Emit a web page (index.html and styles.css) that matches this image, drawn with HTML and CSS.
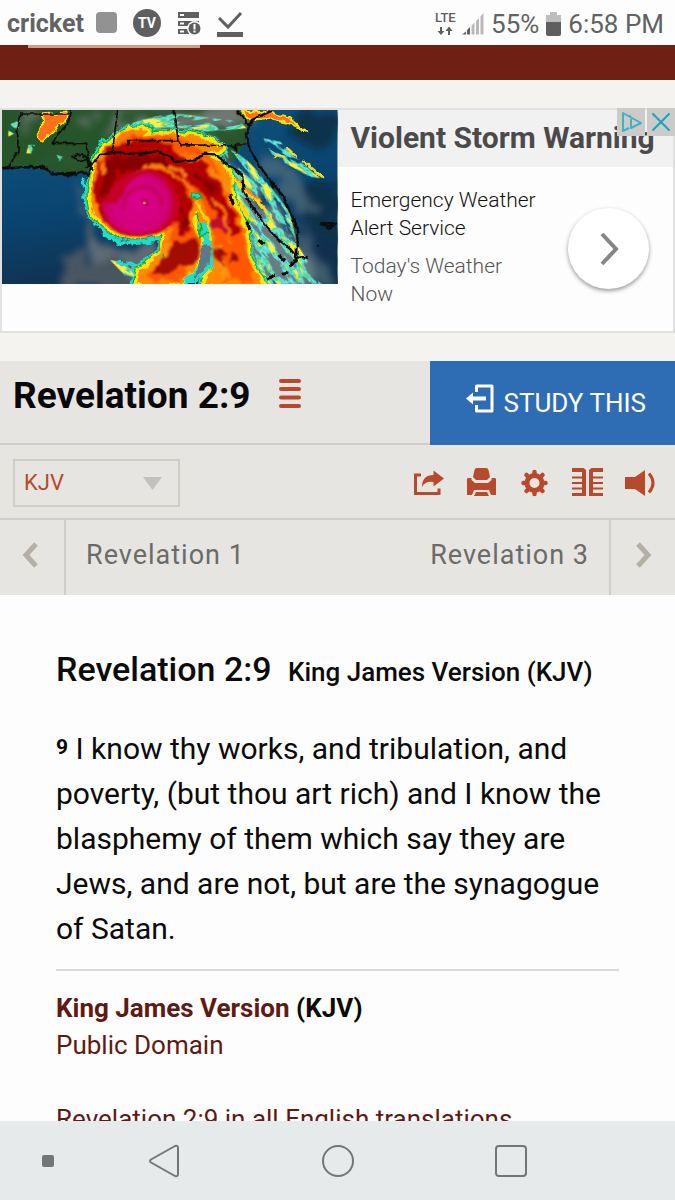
FILE: index.html
```html
<!DOCTYPE html>
<html lang="en">
<head>
<meta charset="utf-8">
<meta name="viewport" content="width=device-width, initial-scale=1">
<title>Revelation 2:9 KJV</title>
<link rel="stylesheet" href="styles.css">
</head>
<body>
<div class="status">
  <div class="status-group">
    <span class="carrier">cricket</span>
    <svg class="status-icons" viewBox="0 0 150 30" width="150" height="30" aria-hidden="true">
      <rect x="1" y="3" width="21" height="21" rx="4" fill="#929292"/>
      <circle cx="52" cy="14" r="14" fill="#5f5f5f"/>
      <text x="52" y="19" class="tv-label" text-anchor="middle">TV</text>
      <path fill="#5f5f5f" d="M83 3h21v6H83zM83 12h21v5H83zM83 20h13v5H83z"/>
      <path fill="#fff" d="M85 5h4v2h-4zM85 13.500h4v2h-4zM85 21.500h4v2h-4z"/>
      <circle cx="99.500" cy="19.500" r="7.500" fill="#fff"/>
      <circle cx="99.500" cy="19.500" r="6" fill="#5f5f5f"/>
      <path stroke="#fff" stroke-width="2" d="M99.500 15v5.500M99.500 21.500v2"/>
      <path fill="none" stroke="#5f5f5f" stroke-width="3" d="M124 9l9 9 13-14"/>
      <path fill="#5f5f5f" d="M122 23h26v5h-26z"/>
    </svg>
  </div>
  <div class="status-group">
    <svg class="signal" viewBox="0 0 49 30" width="49" height="30" aria-hidden="true">
      <text x="0" y="13" class="lte-label">LTE</text>
      <path fill="#5f5f5f" d="M5 18h2v4h2.500L6 26l-3.500-4H5zM13 26h2v-4h2.500L14 17.500 10.500 22H13z"/>
      <path fill="#5f5f5f" d="M27 25.500l4-3v3zM32 21l3-3v7.500h-3z"/>
      <path fill="#b9b9b9" d="M36.500 16.500l3-3v12h-3zM41 12l3-3v16.500h-3zM45.500 7.500l3-3.500v21.500h-3z"/>
    </svg>
    <span class="battery-text">55%</span>
    <svg viewBox="0 0 15 26" width="15" height="26" aria-hidden="true">
      <path fill="#bdbdbd" d="M4 1h7v3h4v9H0V4h4z"/>
      <path fill="#5f5f5f" d="M0 11h15v12q0 2-2 2H2q-2 0-2-2z"/>
    </svg>
    <span class="clock">6:58 PM</span>
  </div>
</div>

<div class="page">
  <header class="banner"><div class="banner-field"></div></header>

  <section class="ad" aria-label="Advertisement">
    <svg class="ad-photo" viewBox="6 30 1006 522" preserveAspectRatio="none" role="img" aria-label="Satellite view of a hurricane">
      <defs>
        <filter id="rough" x="-10%" y="-10%" width="120%" height="120%">
          <feTurbulence type="fractalNoise" baseFrequency="0.035" numOctaves="4" seed="4"/>
          <feDisplacementMap in="SourceGraphic" scale="24" xChannelSelector="R" yChannelSelector="G"/>
        </filter>
        <filter id="heat" x="-10%" y="-10%" width="120%" height="120%">
          <feTurbulence type="fractalNoise" baseFrequency="0.025" numOctaves="4" seed="7"/>
          <feDisplacementMap in="SourceGraphic" scale="44" xChannelSelector="R" yChannelSelector="G"/>
          <feGaussianBlur stdDeviation="3"/>
        </filter>
        <filter id="haze" x="-20%" y="-20%" width="140%" height="140%">
          <feTurbulence type="fractalNoise" baseFrequency="0.015" numOctaves="4" seed="2"/>
          <feDisplacementMap in="SourceGraphic" scale="90" xChannelSelector="R" yChannelSelector="G"/>
          <feGaussianBlur stdDeviation="11"/>
        </filter>
        <filter id="coast" x="-10%" y="-10%" width="120%" height="120%">
          <feTurbulence type="fractalNoise" baseFrequency="0.060" numOctaves="2" seed="9"/>
          <feDisplacementMap in="SourceGraphic" scale="12" xChannelSelector="R" yChannelSelector="G"/>
        </filter>
        <filter id="soft" x="-20%" y="-20%" width="140%" height="140%"><feGaussianBlur stdDeviation="5"/></filter>
        <filter id="streaks" x="-10%" y="-10%" width="120%" height="120%">
          <feTurbulence type="fractalNoise" baseFrequency="0.012 0.045" numOctaves="4" seed="12" result="n"/>
          <feColorMatrix in="n" type="matrix" values="0 0 0 0 0.130  0 0 0 0 0.870  0 0 0 0 0.800  12 0 0 0 -5.100" result="c"/>
          <feColorMatrix in="n" type="matrix" values="0 0 0 0 0.070  0 0 0 0 0.640  0 0 0 0 0.220  16 0 0 0 -8.200" result="g"/>
          <feColorMatrix in="n" type="matrix" values="0 0 0 0 0.960  0 0 0 0 0.860  0 0 0 0 0.060  18 0 0 0 -10.800" result="y"/>
          <feMerge result="m"><feMergeNode in="c"/><feMergeNode in="g"/><feMergeNode in="y"/></feMerge>
          <feComposite in="m" in2="SourceGraphic" operator="in"/>
        </filter>
        <linearGradient id="sea" x1="0" y1="0" x2="0.300" y2="1">
          <stop offset="0" stop-color="#0f5680"/><stop offset="0.600" stop-color="#09446f"/><stop offset="1" stop-color="#12304f"/>
        </linearGradient>
        <radialGradient id="core" gradientUnits="userSpaceOnUse" cx="415" cy="310" r="115">
          <stop offset="0" stop-color="#d9058a"/><stop offset="0.700" stop-color="#d4047c"/><stop offset="1" stop-color="#c00046"/>
        </radialGradient>
        <path id="storm" d="M282 215Q290 150 340 120Q390 85 445 85Q440 98 420 112Q540 94 620 118L665 145Q640 160 610 160Q665 185 688 225L692 300Q730 350 740 410Q735 450 750 490L785 552H610L640 500Q635 440 622 400Q600 370 590 330Q575 360 580 400Q615 420 600 465Q580 510 545 552H415Q405 520 430 500Q475 480 488 450Q480 410 520 372Q460 408 400 408Q330 403 288 350Q262 300 282 240Z"/>
      </defs>
      <rect x="6" y="30" width="1006" height="522" fill="url(#sea)"/>
      <g filter="url(#haze)">
        <path fill="#07304b" d="M900 30h112v70l-60 60-80-60zM900 250h112v190l-90-60zM930 480h92v72h-92z"/>
        <path fill="#5e6a76" d="M235 240l30 130q60 90 160 90l60-30 10 60-80 72H230q20-60 50-90-50-100-45-232z"/>
        <path fill="#4a5662" d="M190 470h200v90H180z"/>
        <path fill="#56707e" d="M760 140q60 0 120 80l70 110-40 10-70-90-60-10zM900 380q50 80 100 130l-20 42H890z" opacity=".7"/>
        <path fill="#687c84" d="M650 160q170 130 240 280l60 112H770L680 330z"/>
      </g>
      <path filter="url(#coast)" fill="#28552c" d="M0 20H790L745 80 735 130 700 180 600 165 520 190 470 158 300 160 265 215 200 225 140 205 6 203z"/>
      <g filter="url(#haze)">
        <path fill="#6f7872" d="M360 30h400l-20 50-210 10-180 0-40 40z"/>
        <path fill="#5f6c60" d="M215 30h80l-50 70zM60 50l50-10-20 60zM580 100l140 60-30 20-100-40z"/>
      </g>
      <path fill="#2b572e" filter="url(#haze)" d="M360 20h150l10 40-150 20zM590 75l130 10 10 35-80-10zM110 150l140 10 10 40-140 10z"/>
      <g transform="rotate(-10)" filter="url(#streaks)"><g transform="rotate(10)"><path d="M340 100Q420 45 540 42L720 65 740 85 620 95Q450 60 340 120z"/></g></g>
      <g transform="rotate(55)" filter="url(#streaks)"><g transform="rotate(-55)"><path d="M610 125Q700 135 760 200Q830 280 870 340L890 430L965 552H770L740 410L690 300L660 180Z"/></g></g>
      <g transform="rotate(30)" filter="url(#streaks)"><g transform="rotate(-30)"><path d="M25 75l35-15-5 35-30 15zM85 135l20 0-12 25-14 0zM170 165l18 5-10 15zM790 115l50 10 50 50 70 60-30-5-110-60zM330 480l70 15 40 57-60-20z"/></g></g>
      <g filter="url(#rough)" stroke-linejoin="round">
        <path fill="none" stroke="#22dccb" stroke-width="10" d="M255 235q-10 80 35 135 30 50 90 60l100-10-10 45-60 30-60-5M610 380q-20 20-25 50l50 0"/>
        <use href="#storm" fill="#22dccb" stroke="#22dccb" stroke-width="36"/>
        <use href="#storm" fill="#18a93a" stroke="#18a93a" stroke-width="28"/>
        <use href="#storm" fill="#fbe40c" stroke="#fbe40c" stroke-width="21"/>
        <use href="#storm" fill="#ff8a00"/>
        <path fill="#22dccb" d="M590 370l45 0 5 130-60 52h-30l50-75 10-50z"/>
        <path fill="#5f7786" d="M605 440l28 0-5 60-50 42 20-60z"/>
        <path fill="none" stroke="#ffd80c" stroke-width="9" d="M585 300l35 60 15 60M700 240l70 60 50 60M715 305l40 60"/>
        <path fill="none" stroke="#ff8a10" stroke-width="6" d="M705 240l80 65"/>
        <path fill="#ff7114" stroke="#f7e713" stroke-width="5" d="M125 42l75-5q5 30-35 50l-40 38-12-10 12-35z"/>
        <path fill="#ff7114" stroke="#f7e713" stroke-width="6" d="M725 32l80 0 60 18 55 45-50-25-80-15-40 5z"/>
        <path fill="none" stroke="#e9df21" stroke-width="9" d="M860 138l36 34M910 185l60 50M825 165l30 10"/>
      </g>
      <g filter="url(#heat)">
        <path fill="#ff5600" d="M282 225Q320 115 410 110Q530 100 600 135L610 160Q680 210 688 300Q730 370 738 450L760 545H660L650 480 630 350 590 290 560 320 575 400 600 430 590 480 540 540 430 540 480 480 510 440 510 380Q440 405 380 398Q290 380 282 300z"/>
        <path fill="#ff8f08" d="M640 200l40 40 5 50-40-60zM640 440l20 0 40 100h-40zM490 430l30-10-30 60-20 0z"/>
        <path fill="#b50603" d="M288 215Q310 135 390 120Q480 112 520 150L600 180Q650 220 665 270Q705 320 722 400Q690 430 655 380Q630 300 600 275L545 235 578 330 565 400 540 395 522 362Q470 396 400 396Q320 390 290 330Q272 270 288 215Z"/>
        <path fill="#a30703" d="M525 425q75-10 75 30t-55 55-75 10 55-95zM645 445l25 10 5 35-25-10zM690 460l25 5-5 30-20-5z"/>
        <path fill="#890305" d="M300 200q70-60 190-30l20 30-150 10-50 90zM570 200l50 35 30 50-40-15zM540 310l35 60-25 25z"/>
        <path fill="#c4072b" d="M630 350l60 10-10 40-40-15z"/>
        <path fill="none" stroke="#ff7a08" stroke-width="9" d="M405 215q50-30 105 0l60 50 10 50M450 195q70-5 110 40M312 175l-10 50M535 150l75 35 60 60M330 130l80-30M640 290l30 60 35 90"/>
      </g>
      <g filter="url(#rough)"><path fill="#22dccb" stroke="#18a93a" stroke-width="5" d="M572 280q20-10 35 12-20 15-35-12z"/><path fill="none" stroke="#18a93a" stroke-width="5" d="M590 340l15 40-10 30 30-10M490 465l5 5"/></g>
      <path fill="#c60028" filter="url(#soft)" d="M322 290q30-75 120-84 75 15 95 94 5 65-50 95-85 28-140 0-50-40-40-95z"/>
      <path fill="url(#core)" filter="url(#soft)" d="M378 260q25-35 65-40 60 10 75 75 5 65-50 97-60 22-115-5-50-30-47-85 50 30 72-42z"/>
      <path fill="none" stroke="#c00052" stroke-width="8" filter="url(#soft)" d="M370 330q0-60 55-70 60 5 60 60"/>
      <path fill="none" stroke="#b50b43" stroke-width="4" d="M424 307q3-12 16-6 8 10-3 15"/>
      <circle cx="433" cy="309" r="4" fill="#eaa238"/>
      <g filter="url(#coast)" fill="none" stroke="#0c0c0c" stroke-width="5">
        <path d="M6 205l25-8 8-20 14-20 4-30-6-30 12-55h143M211 30l-6 40-30 30-18 30h100l8 40M336 160l17-130M385 138l-2-16h150l-5-60-10-32M533 122l10 12 155 4 8 14 0-20h32M215 170l30-8 20 15-25 8z"/>
        <path stroke-width="7" d="M6 205l90-4 40 5 24 16 50 5 35-12 20 12 10-30 20-30 5-5 60-3 60 3 50-8 35 12 20 20 60-5 25-20 35 2 45 36 36 24 5 50 20 40 35 45 35 50 50 40 20 25 35-2M893 440L890 380 850 290 790 215 750 150 737 105 755 60 815 32M748 75l-38-45"/>
        <path stroke-width="9" d="M105 200h30M170 222l55-3M255 205l22-15M262 180l15 30M692 285l8 30M740 365l10 25M775 420l15 15M835 465l20 20M812 240l8 25M888 440l0 40-20 20M800 537l28-12M960 370l50 2-25 10zM845 523l20-5M955 435v8"/>
      </g>
    </svg>
    <div class="ad-text">
      <h2 class="ad-title">Violent Storm Warning</h2>
      <div class="ad-body">
        <div class="ad-copy">
          <p class="ad-lead">Emergency Weather Alert Service</p>
          <p class="ad-source">Today's Weather Now</p>
        </div>
        <button class="ad-go" aria-label="Open ad">
          <svg viewBox="0 0 24 36" width="24" height="36" aria-hidden="true"><path d="M5 3l14 15L5 33" fill="none" stroke="#858585" stroke-width="4"/></svg>
        </button>
      </div>
    </div>
    <div class="ad-badges">
      <button class="badge" aria-label="AdChoices"><svg viewBox="0 0 28 28" width="28" height="28"><path fill="none" stroke="#3db2c9" stroke-width="2" stroke-linejoin="round" d="M12 20l-6 3V5l18 10-10 5V11"/><circle cx="13" cy="8" r="1" fill="#3db2c9"/></svg></button>
      <button class="badge" aria-label="Close ad"><svg viewBox="0 0 28 28" width="28" height="28"><path stroke="#1ba3c0" stroke-width="2" stroke-linecap="round" d="M6 6l16 16M22 6L6 22"/></svg></button>
    </div>
  </section>

  <div class="passage-bar">
    <h1 class="passage-title">Revelation 2:9</h1>
    <button class="plain" aria-label="Passage menu"><svg viewBox="0 0 22 32" width="22" height="32"><path stroke="#b84a2b" stroke-width="4" stroke-linecap="round" d="M2 3h18M2 11h18M2 19.500h18M2 28h18"/></svg></button>
    <button class="study"><svg viewBox="0 0 28 30" width="28" height="30" aria-hidden="true"><path fill="none" stroke="#fff" stroke-width="3" stroke-linejoin="round" d="M10.500 9V3H26v25H10.500v-6"/><path fill="#fff" d="M0 15.500l7-6v4h13v4H7v4z"/></svg><span>STUDY THIS</span></button>
  </div>

  <div class="tools">
    <div class="version">
      <select class="version-select" aria-label="Version"><option>KJV</option></select>
      <svg class="version-arrow" viewBox="0 0 19 13" width="19" height="13" aria-hidden="true"><path fill="#c2c1bd" d="M0 0h19L9.500 13z"/></svg>
    </div>
    <div class="tool-icons">
      <button class="plain" aria-label="Share"><svg viewBox="0 0 32 32" width="32" height="32"><path fill="none" stroke="#b84a2b" stroke-width="3" d="M9 8H3.500v18.500H27v-5"/><path fill="#b84a2b" d="M10 20Q10 8 21.500 8V3.500L32 11.500l-10.500 8V15Q13 14 10 20z"/></svg></button>
      <button class="plain" aria-label="Print"><svg viewBox="0 0 32 32" width="32" height="32"><path fill="#b84a2b" d="M12 1h9q2 0 2.500 2L25 10l-3 3H11l-3-3 1.500-7Q10 1 12 1zM3 11h3.500v2l3.500 3h13l3.500-3v-2H30q1 0 1 1v16h-5l-2-5H9l-2 5H2V12q0-1 1-1zM11 25h11l2 4H9z"/></svg></button>
      <button class="plain" aria-label="Settings"><svg viewBox="0 0 32 32" width="32" height="32"><circle cx="16.500" cy="16" r="7.500" fill="none" stroke="#b84a2b" stroke-width="5"/><g stroke="#b84a2b" stroke-width="4.500" stroke-linecap="round"><path d="M16.500 5v3M16.500 24v3M5.500 16h3M24.500 16h3M8.500 8L11 10.500M22 21.500l2.500 2.500M8.500 24l2.500-2.500M22 10.500L24.500 8"/></g></svg></button>
      <button class="plain" aria-label="Parallel view"><svg viewBox="0 0 32 32" width="32" height="32"><path fill="#b84a2b" d="M1 1h11.500l2.500 2v26H1v-3h10v-3.500H1v-2h10V17H1v-2h10v-3.500H1v-2h10V5H1zM32 1H20.500L18 3v26h14v-3H22v-3.500h10v-2H22V17h10v-2H22v-3.500h10v-2H22V5h10z"/></svg></button>
      <button class="plain" aria-label="Listen"><svg viewBox="0 0 32 32" width="32" height="32"><path fill="#b84a2b" d="M1 10h10l10-7v26l-10-7H1z"/><path fill="none" stroke="#b84a2b" stroke-width="3" d="M25 6.500q8 9.500 0 19"/></svg></button>
    </div>
  </div>

  <nav class="chapters">
    <a href="#prev" class="chapter-arrow chapter-arrow-prev" aria-label="Previous chapter"><svg viewBox="0 0 18 26" width="18" height="26"><path d="M15 2L5 13l10 11" fill="none" stroke="#b5b0a5" stroke-width="5"/></svg></a>
    <a href="#prev" class="chapter">Revelation 1</a>
    <a href="#next" class="chapter chapter-next">Revelation 3</a>
    <a href="#next" class="chapter-arrow chapter-arrow-next" aria-label="Next chapter"><svg viewBox="0 0 18 26" width="18" height="26"><path d="M4 2l10 11L4 24" fill="none" stroke="#b5b0a5" stroke-width="5"/></svg></a>
  </nav>

  <main class="content">
    <h2 class="verse-title">Revelation 2:9 <span class="verse-version">King James Version (KJV)</span></h2>
    <p class="verse"><sup class="verse-num">9</sup> I know thy works, and tribulation, and poverty, (but thou art rich) and I know the blasphemy of them which say they are Jews, and are not, but are the synagogue of Satan.</p>
    <div class="source">
      <p><strong><a href="#kjv" class="link">King James Version</a> (KJV)</strong></p>
      <p><a href="#domain" class="link">Public Domain</a></p>
      <p class="translations"><a href="#all" class="link">Revelation 2:9 in all English translations</a></p>
    </div>
  </main>
</div>

<nav class="navbar" aria-label="System">
  <button class="plain" aria-label="Notifications"><svg viewBox="0 0 12 12" width="12" height="12"><rect width="12" height="12" rx="2" fill="#737677"/></svg></button>
  <button class="plain" aria-label="Back"><svg viewBox="0 0 32 36" width="32" height="36"><path fill="none" stroke="#737677" stroke-width="2" stroke-linejoin="round" d="M3 16.500Q1 18 3 19.500L27 33q3 1 3-2V5q0-3-3-2z"/></svg></button>
  <button class="plain" aria-label="Home"><svg viewBox="0 0 34 34" width="34" height="34"><circle cx="17" cy="17" r="15" fill="none" stroke="#737677" stroke-width="2"/></svg></button>
  <button class="plain" aria-label="Recent apps"><svg viewBox="0 0 34 34" width="34" height="34"><rect x="2" y="2" width="30" height="30" rx="3" fill="none" stroke="#737677" stroke-width="2"/></svg></button>
</nav>
</body>
</html>
```
FILE: styles.css
```css
* {
  box-sizing: border-box;
}

body {
  margin: 0;
  height: 100vh;
  display: flex;
  flex-direction: column;
  overflow: hidden;
  background: #fdfdfd;
  color: #0b0b0b;
  font-family: Roboto, "Liberation Sans", sans-serif;
}

h1, h2, p {
  margin: 0;
}

svg {
  display: block;
}

button {
  font: inherit;
  cursor: pointer;
}

.plain {
  padding: 0;
  border: 0;
  background: none;
}

.status {
  flex: none;
  display: flex;
  justify-content: space-between;
  align-items: center;
  height: 45px;
  padding: 2px 11px 0 7px;
  background: #fdfdfd;
  color: #626262;
}

.status-group {
  display: flex;
  align-items: center;
  gap: 7px;
}

.carrier {
  margin-right: 4px;
  font-size: 25px;
  font-weight: 700;
}

.battery-text,
.clock {
  font-size: 26px;
}

.tv-label {
  fill: #fff;
  font-size: 14px;
  font-weight: 700;
}

.lte-label {
  fill: #5f5f5f;
  font-size: 13px;
  font-weight: 500;
}

.page {
  flex: 1;
  min-height: 0;
  overflow: hidden;
  background: #f4f3ef;
}

.banner {
  height: 35px;
  padding-left: 28px;
  background: #6f1f13;
}

.banner-field {
  width: 172px;
  height: 3px;
  background: #d59a86;
}

.ad {
  position: relative;
  display: grid;
  grid-template-columns: 1fr 1fr;
  margin: 28px 0;
  border: 2px solid #e1e1e2;
  background: #fdfdfd;
}

.ad-photo {
  width: 100%;
  height: 174px;
}

.ad-title {
  padding: 0 0 2px 13px;
  background: #f2f1f2;
  color: #4a4a4b;
  font-size: 30px;
  font-weight: 700;
  line-height: 55px;
  white-space: nowrap;
}

.ad-body {
  display: flex;
  justify-content: space-between;
  align-items: flex-start;
  padding: 19px 24px 23px 13px;
}

.ad-copy {
  width: 190px;
  font-size: 21px;
  font-weight: 300;
  line-height: 28px;
}

.ad-lead {
  margin-bottom: 10px;
  color: #111;
}

.ad-source {
  width: 170px;
  color: #555;
}

.ad-go {
  flex: none;
  display: grid;
  place-items: center;
  width: 81px;
  height: 81px;
  margin-top: 22px;
  padding: 0;
  border: 0;
  border-radius: 50%;
  background: #fff;
  box-shadow: 0 2px 4px rgba(0, 0, 0, 0.4);
}

.ad-badges {
  position: absolute;
  top: -2px;
  right: -2px;
  display: flex;
  gap: 2px;
}

.badge {
  padding: 0;
  border: 0;
  background: #cbcbca;
}

.passage-bar {
  display: flex;
  align-items: center;
  height: 84px;
  padding-left: 13px;
  border-bottom: 2px solid #cfcecb;
  background: #e6e5e1;
}

.passage-title {
  margin-right: 28px;
  padding-bottom: 14px;
  color: #080808;
  font-size: 37px;
  font-weight: 700;
}

.passage-bar > .plain {
  padding-bottom: 16px;
}

.study {
  display: flex;
  align-items: center;
  justify-content: flex-end;
  gap: 10px;
  width: 245px;
  height: 84px;
  margin: 0 0 -2px auto;
  padding: 0 29px 11px 0;
  border: 0;
  background: #2e6db4;
  color: #fff;
  font-size: 26px;
}

.study span {
  padding-top: 11px;
}

.tools {
  display: flex;
  align-items: center;
  justify-content: space-between;
  height: 75px;
  padding: 2px 19px 0 13px;
  border-bottom: 2px solid #cfcecb;
  background: #e6e5e1;
}

.version {
  position: relative;
}

.version-select {
  display: block;
  width: 167px;
  height: 48px;
  padding: 0 9px;
  border: 2px solid #cfcec6;
  border-radius: 0;
  appearance: none;
  background: transparent;
  color: #b84a2b;
  font: 22px Roboto, "Liberation Sans", sans-serif;
}

.version-arrow {
  position: absolute;
  top: 18px;
  right: 18px;
  pointer-events: none;
}

.tool-icons {
  display: flex;
  gap: 21px;
}

.chapters {
  display: flex;
  height: 75px;
  background: #e6e5e1;
}

.chapter-arrow {
  display: grid;
  place-items: center;
  width: 66px;
  padding-bottom: 6px;
}

.chapter-arrow-prev {
  padding-right: 4px;
  border-right: 2px solid #cfcecb;
}

.chapter-arrow-next {
  border-left: 2px solid #cfcecb;
}

.chapter {
  flex: 1;
  padding: 0 20px;
  color: #6b6b69;
  font-size: 27px;
  letter-spacing: 1px;
  line-height: 70px;
  text-decoration: none;
}

.chapter-next {
  text-align: right;
}

.content {
  padding: 50px 56px 0;
  background: #fdfdfd;
}

.verse-title {
  font-size: 34px;
  font-weight: 500;
  line-height: 48px;
}

.verse-version {
  margin-left: 8px;
  font-size: 26px;
}

.verse {
  margin-top: 30px;
  padding-bottom: 18px;
  border-bottom: 2px solid #d9d9d9;
  font-size: 30px;
  line-height: 45px;
}

.verse-num {
  font-size: 21px;
  font-weight: 700;
  line-height: 1;
  vertical-align: 5px;
}

.source {
  padding-top: 19px;
  font-size: 26px;
  line-height: 37px;
}

.translations {
  margin-top: 37px;
}

.link {
  color: #5f1a14;
  text-decoration: none;
}

.navbar {
  flex: none;
  display: grid;
  grid-template-columns: 95px 138px 1fr 138px 95px;
  place-items: center;
  height: 79px;
  background: #e6eaeb;
}
```
